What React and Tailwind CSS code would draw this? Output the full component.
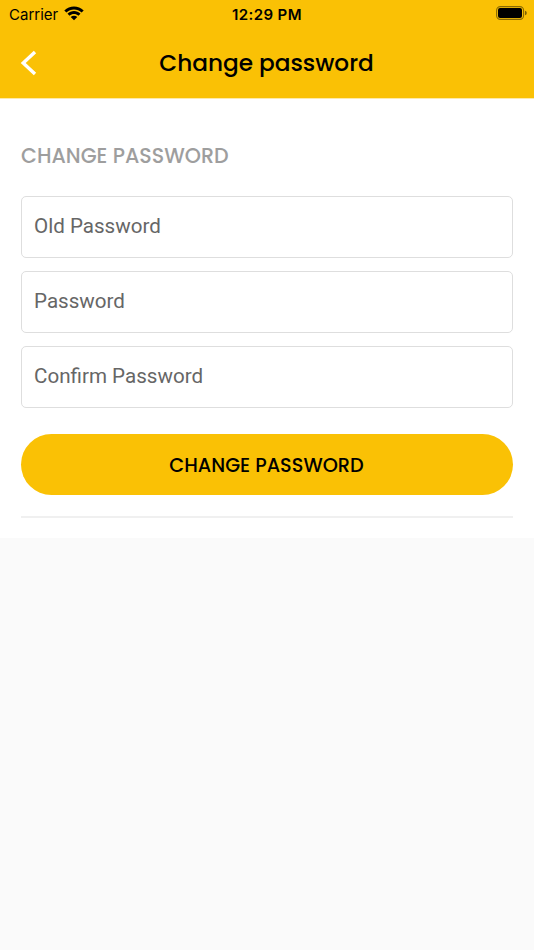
const fields = ["Old Password", "Password", "Confirm Password"];

export default function App() {
  return (
    <div className="h-[950px] w-[534px] overflow-hidden bg-[#fafafa] font-['Poppins','Inter',sans-serif] text-black">
      <header className="h-[98px] bg-[#fac105]">
        <div className="grid h-7 grid-cols-3 items-center pl-[9px] pr-[7px] font-['Inter',sans-serif] leading-5">
          <div className="flex items-center gap-[6px] whitespace-nowrap">
            <span className="w-[49px] pt-px text-[15px]">Carrier</span>
            <svg className="-mt-0.5" width="20" height="15" viewBox="0 0 20 15">
              <path d="M.3 4.5C5.7-.9 14.3-.9 19.7 4.5L17.6 6.6C13.4 2.4 6.6 2.4 2.4 6.6ZM3.5 7.8C7.1 4.2 12.9 4.2 16.5 7.8L14.4 9.8C12 7.4 8 7.4 5.6 9.8ZM6.7 11C8.6 9.3 11.4 9.3 13.3 11L10 14.3Z" />
            </svg>
          </div>
          <div className="whitespace-nowrap pr-[2px] pt-px text-center text-[15px] font-semibold tracking-[0.4px]">12:29 PM</div>
          <div className="flex justify-end">
            <svg className="-mt-0.5" width="31" height="14" viewBox="0 0 31 14">
              <rect x=".6" y=".6" width="27" height="12.8" rx="3.8" fill="none" stroke="#000" strokeWidth="1.1" strokeOpacity=".45" />
              <rect x="2" y="2.1" width="24" height="9.8" rx="2" />
              <path d="M29 4.7Q30.8 5.3 30.8 7T29 9.3Z" fillOpacity=".5" />
            </svg>
          </div>
        </div>
        <div className="grid h-[70px] grid-cols-[60px_1fr_60px] items-center">
          <button aria-label="Back" className="ml-5">
            <svg className="-mt-px" width="18" height="28" viewBox="0 0 18 28">
              <path d="M15 2.9L3.2 14L15 25.1" fill="none" stroke="#fff" strokeWidth="3.4" />
            </svg>
          </button>
          <h1 className="whitespace-nowrap pr-px text-center text-[23.2px] font-medium leading-[30px]">Change password</h1>
        </div>
      </header>
      <main className="h-[440px] border-t border-[#fdeaaa] bg-white px-[21px] pt-[42px]">
        <h2 className="h-[30px] whitespace-nowrap text-[20.6px] font-medium leading-[30px] text-[#9e9e9e]">CHANGE PASSWORD</h2>
        <div className="mt-[25px] flex flex-col gap-[13px]">
          {fields.map((label) => (
            <input
              key={label}
              type="password"
              placeholder={label}
              className="h-[62px] w-full rounded-[5px] border border-[#dedede] px-3 pb-0.5 font-['Roboto',sans-serif] text-[20.6px] placeholder:text-[#666]"
            />
          ))}
        </div>
        <button className="mt-[26px] flex h-[61px] w-full items-center justify-center rounded-full bg-[#fac105] pr-px pt-[2px]">
          <span className="whitespace-nowrap text-[19.3px] font-medium leading-[30px]">CHANGE PASSWORD</span>
        </button>
        <div className="mt-[21px] h-0.5 bg-[#f0f0f0]" />
      </main>
    </div>
  );
}
